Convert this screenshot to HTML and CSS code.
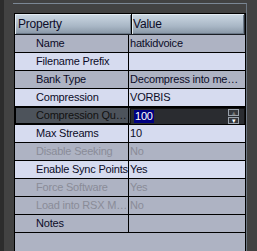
FILE: index.html
```html
<!DOCTYPE html>
<html lang="en">
<head>
    <meta charset="UTF-8">
    <title>Properties</title>
    <link rel="stylesheet" href="styles.css">
</head>
<body>
    <div class="edge"></div>
    <div class="panel">
        <div class="grid">
            <div class="head">
                <div class="cell name">Property</div>
                <div class="cell value">Value</div>
            </div>

            <div class="row">
                <div class="cell name">Name</div>
                <div class="cell value">hatkidvoice</div>
            </div>
            <div class="row alt">
                <div class="cell name">Filename Prefix</div>
                <div class="cell value"></div>
            </div>
            <div class="row">
                <div class="cell name">Bank Type</div>
                <div class="cell value">Decompress into me…</div>
            </div>
            <div class="row alt">
                <div class="cell name">Compression</div>
                <div class="cell value">VORBIS</div>
            </div>
            <!-- ligne en cours d'édition -->
            <div class="row selected">
                <div class="cell name">Compression Qu…</div>
                <div class="cell value">
                    <div class="editor">
                        <span class="sel">100</span>
                        <div class="spin">
                            <span class="up">▴</span>
                            <span class="down">▾</span>
                        </div>
                    </div>
                </div>
            </div>
            <div class="row alt">
                <div class="cell name">Max Streams</div>
                <div class="cell value">10</div>
            </div>
            <div class="row disabled">
                <div class="cell name">Disable Seeking</div>
                <div class="cell value">No</div>
            </div>
            <div class="row alt">
                <div class="cell name">Enable Sync Points</div>
                <div class="cell value">Yes</div>
            </div>
            <div class="row disabled">
                <div class="cell name">Force Software</div>
                <div class="cell value">Yes</div>
            </div>
            <div class="row disabled">
                <div class="cell name">Load into RSX M…</div>
                <div class="cell value">No</div>
            </div>
            <div class="row">
                <div class="cell name">Notes</div>
                <div class="cell value"></div>
            </div>
            <div class="blank"></div>
        </div>
    </div>
</body>
</html>
```

FILE: styles.css
```css
body {
    margin: 0;
    padding: 0;
    width: 257px;
    height: 251px;
    overflow: hidden;
    background: #424242;
    display: flex;
    font-family: 'Liberation Sans', Arial, sans-serif;
    font-size: 11px;
    letter-spacing: -0.2px;
    color: #0c0c28;
}

/* bande sombre à gauche */
.edge {
    width: 4px;
    background: #2c2c2c;
    flex: none;
}

/* Panneau */
.panel {
    margin-left: 9px;
    margin-top: 3px;
    width: 232px;
    border-top: 1px solid #7b8794;
    border-right: 1px solid #6c7682;
    padding: 9px 0 0 1px;
    display: flex;
    flex-direction: column;
}

.grid {
    flex: 1;
    border: 1px solid #000;
    border-bottom: none;
    background: #aeb3c3;
    display: flex;
    flex-direction: column;
}

.head {
    display: flex;
    height: 20px;
    border-bottom: 1px solid #1a1e24;
    background: linear-gradient(#ccd8e3, #a9b7c6 60%, #8896a5);
    font-size: 12px;
}

.head .cell {
    padding-left: 3px;
    line-height: 20px;
    border-right: 1px solid #2a2f36;
    box-shadow: inset 1px 1px 0 #e4ecf3, inset -1px -1px 0 #6b7888;
}

.head .value {
    padding-left: 2px;
}

.row {
    display: flex;
    height: 17px;
    border-bottom: 1px solid #000;
    background: #aeb3c3;
}

.row.alt {
    background: #d6dbef;
}

.cell {
    line-height: 17px;
    white-space: nowrap;
    overflow: hidden;
}

.cell.name {
    width: 113px;
    border-right: 1px solid #000;
}

.row .name {
    padding-left: 21px;
    width: 92px;
}

.cell.value {
    flex: 1;
    padding-left: 1px;
}

.disabled {
    color: #8a8c98;
}

/* Ligne sélectionnée */
.row.selected {
    background: #4d535b;
    box-shadow: inset 0 0 0 1px #000;
    color: #111;
}

.editor {
    height: 15px;
    margin: 1px 0 1px 0;
    background: #2a2c30;
    border: 1px solid #111;
    display: flex;
    align-items: center;
    padding-left: 3px;
}

.sel {
    background: #000080;
    color: #fff;
    line-height: 13px;
    padding: 0 1px;
}

.spin {
    margin-left: auto;
    margin-right: 5px;
    display: flex;
    flex-direction: column;
    gap: 1px;
}

.spin span {
    width: 9px;
    height: 5px;
    border: 1px solid #9aa2ac;
    background: #35383d;
    font-size: 7px;
    line-height: 5px;
    text-align: center;
    color: #fff;
}

.spin .up {
    color: #777;
}

.blank {
    flex: 1;
    background: #aeb3c3;
}
```
